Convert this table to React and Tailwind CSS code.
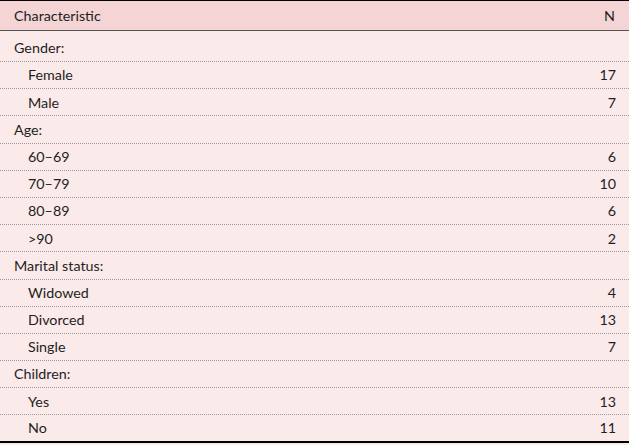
export default function App() {
  const rows = [
    ["Gender:", "", false],
    ["Female", "17", true],
    ["Male", "7", true],
    ["Age:", "", false],
    ["60–69", "6", true],
    ["70–79", "10", true],
    ["80–89", "6", true],
    [">90", "2", true],
    ["Marital status:", "", false],
    ["Widowed", "4", true],
    ["Divorced", "13", true],
    ["Single", "7", true],
    ["Children:", "", false],
    ["Yes", "13", true],
    ["No", "11", true],
  ];
  return (
    <div className="w-[629px] h-[445px] bg-[#fbeaea] text-[#1e1e1e] text-[14.3px]" style={{ fontFamily: "Lato, 'Noto Sans', sans-serif" }}>
      <div className="border-t border-black">
        <div className="flex justify-between items-center h-[30px] bg-[#f4d4d4] border-b border-[#555] pl-[14px] pr-[14px]">
          <span>Characteristic</span>
          <span>N</span>
        </div>
        {rows.map(([label, n, indent], i) => (
          <div
            key={i}
            className={
              "flex justify-between items-center pr-[13px] " +
              (indent ? "pl-[28px] " : "pl-[14px] ") +
              (i === 0 ? "h-[31px] pt-[3px] " : "h-[27.2px] ") +
              (i === rows.length - 1 ? "border-b-2 border-black" : "border-b border-dotted border-[#999]")
            }
          >
            <span>{label}</span>
            <span>{n}</span>
          </div>
        ))}
      </div>
    </div>
  );
}
